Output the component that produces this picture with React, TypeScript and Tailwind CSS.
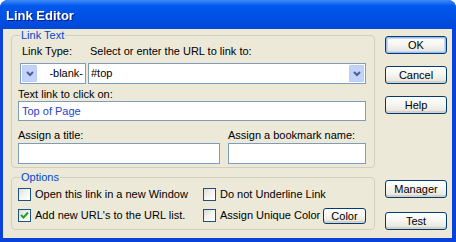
import React from 'react';

const Chevron = () => (
    <svg width="8" height="6" viewBox="0 0 8 6" className="block">
        <path d="M1 1 L4 4 L7 1" fill="none" stroke="#4d6185" strokeWidth="2" />
    </svg>
);

const DropButton = () => (
    <div className="w-[15px] h-[17px] bg-[#c1d3fb] border border-[#b9cdf6] rounded-[1px] flex items-center justify-center">
        <Chevron />
    </div>
);

const Checkbox = ({ checked }: { checked?: boolean }) => (
    <div className="w-[13px] h-[13px] border border-[#1c5180] bg-gradient-to-br from-[#dcdcd7] via-[#f4f4f0] to-white flex items-center justify-center shrink-0">
        {checked && (
            <svg width="9" height="9" viewBox="0 0 9 9" className="block">
                <path d="M1 4 L3.5 6.5 L8 1.5" fill="none" stroke="#21a121" strokeWidth="2" />
            </svg>
        )}
    </div>
);

const XpButton = ({ label, primary, className = '' }: { label: string; primary?: boolean; className?: string }) => (
    <button
        className={`w-[62px] h-[18px] rounded-[3px] border border-[#003c74] bg-gradient-to-b from-white via-[#f5f4ef] to-[#e3e2da] text-[11px] leading-[12px] text-black flex items-center justify-center ${primary ? 'shadow-[inset_0_0_0_1px_#9cbdf0,inset_0_0_0_2px_#c6d8f7]' : 'shadow-[inset_0_-2px_0_#d6d0c5]'} ${className}`}
    >
        {label}
    </button>
);

const TextBox = ({ value, className = '' }: { value?: string; className?: string }) => (
    <div className={`border border-[#7f9db9] bg-white px-[3px] flex items-center text-[#1d45d0] ${className}`}>
        {value}
    </div>
);

export default function App() {
    return (
        <div className="w-[456px] h-[242px] bg-[#0842d8] rounded-t-[8px] flex flex-col overflow-hidden font-['Liberation_Sans',Arial,sans-serif] text-[11px] leading-[13px] text-black">
            {/* Title bar */}
            <div className="h-[29px] shrink-0 bg-gradient-to-b from-[#3d8af7] via-[#0058ee] via-[20%] to-[#0048d8] flex items-center pl-[6px] pt-[2px]">
                <span className="text-white font-bold text-[13px] leading-[16px] drop-shadow-[1px_1px_0_#0a1e80]">Link Editor</span>
            </div>

            {/* Body */}
            <div className="flex-1 ml-[3px] mr-[4px] mb-[4px] bg-[#ece9d8] flex">
                <div className="ml-[8px] w-[364px] flex flex-col">
                    <fieldset className="border border-[#d0d0bf] rounded-[4px] pl-[6px] pr-[8px] pt-[3px] pb-[3px]">
                        <legend className="ml-[2px] px-[1px] text-[#0046d5]">Link Text</legend>
                        <div className="flex">
                            <span className="ml-[4px] w-[68px]">Link Type:</span>
                            <span>Select or enter the URL to link to:</span>
                        </div>
                        <div className="flex mt-[5px] h-[21px] gap-[2px]">
                            <div className="ml-[2px] w-[66px] border border-[#7f9db9] bg-white flex items-center pl-[1px] pr-[2px] justify-between">
                                <DropButton />
                                <span>-blank-</span>
                            </div>
                            <div className="flex-1 border border-[#7f9db9] bg-white flex items-center pl-[2px] pr-[1px] justify-between">
                                <span>#top</span>
                                <DropButton />
                            </div>
                        </div>
                        <div className="mt-[4px]">Text link to click on:</div>
                        <TextBox value="Top of Page" className="h-[20px]" />
                        <div className="mt-[8px] grid grid-cols-[202px_1fr] gap-[8px]">
                            <span>Assign a title:</span>
                            <span>Assign a bookmark name:</span>
                        </div>
                        <div className="mt-[1px] grid grid-cols-[202px_1fr] gap-[8px]">
                            <TextBox className="h-[21px]" />
                            <TextBox className="h-[21px]" />
                        </div>
                    </fieldset>

                    <fieldset className="mt-[3px] border border-[#d0d0bf] rounded-[4px] pl-[6px] pr-[8px] pt-[4px] pb-[6px]">
                        <legend className="ml-[2px] px-[1px] text-[#0046d5]">Options</legend>
                        <div className="grid grid-cols-[185px_1fr]">
                            <label className="flex items-center gap-[4px] h-[13px]">
                                <Checkbox />
                                <span>Open this link in a new Window</span>
                            </label>
                            <label className="flex items-center gap-[4px] h-[13px]">
                                <Checkbox />
                                <span>Do not Underline Link</span>
                            </label>
                            <label className="flex items-center gap-[4px] h-[15px] mt-[7px]">
                                <Checkbox checked />
                                <span>Add new URL's to the URL list.</span>
                            </label>
                            <div className="flex items-center h-[15px] mt-[7px]">
                                <label className="flex items-center gap-[4px]">
                                    <Checkbox />
                                    <span>Assign Unique Color</span>
                                </label>
                                <XpButton label="Color" className="ml-auto !w-[43px] !h-[16px]" />
                            </div>
                        </div>
                    </fieldset>
                </div>

                <div className="ml-[10px] flex flex-col">
                    <XpButton label="OK" primary className="mt-[7px]" />
                    <XpButton label="Cancel" className="mt-[12px]" />
                    <XpButton label="Help" className="mt-[12px]" />
                    <XpButton label="Manager" className="mt-[66px]" />
                    <XpButton label="Test" className="mt-[14px]" />
                </div>
            </div>
        </div>
    );
}
